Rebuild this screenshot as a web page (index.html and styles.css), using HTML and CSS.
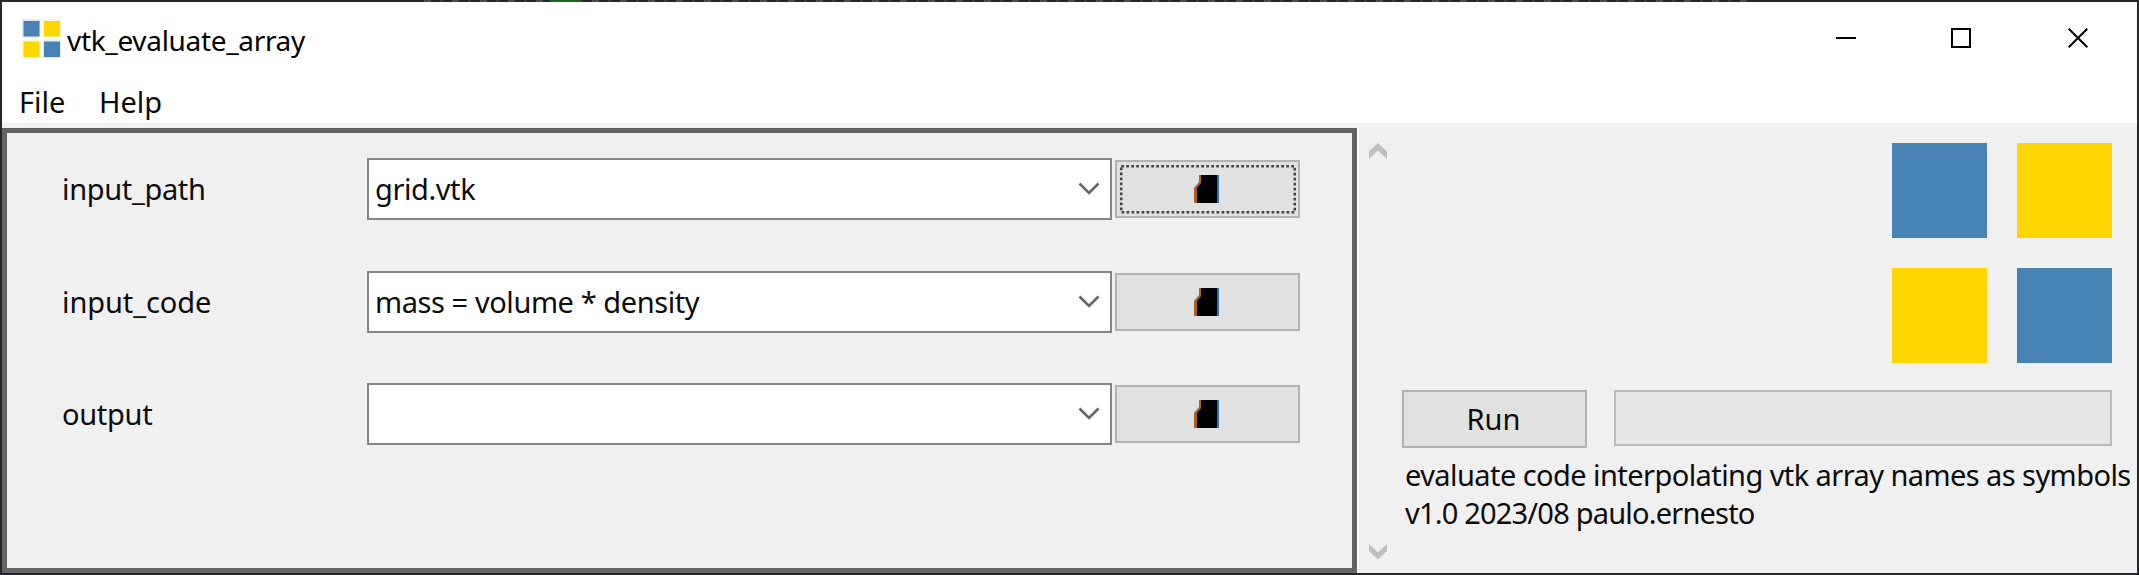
FILE: index.html
```html
<!DOCTYPE html>
<html lang="en">
<head>
<meta charset="utf-8">
<title>vtk_evaluate_array</title>
<link rel="stylesheet" href="styles.css">
</head>
<body>
<div class="window">
  <div class="backdrop"></div>
  <header class="titlebar">
    <svg class="app-icon" viewBox="0 0 40 40"><path class="halo-blue" d="M0 0h18.500v18.500H0zM20.500 20.500H39V39H20.500z"/><path class="halo-gold" d="M20.500 0H39v18.500H20.500zM0 20.500h18.500V39H0z"/><path class="blue" d="M1.500 2h16v15.500h-16zM22 22.500h16V38H22z"/><path class="gold" d="M22 2h16v15.500H22zM1.500 22.500h16V38h-16z"/></svg>
    <h1 class="title">vtk_evaluate_array</h1>
    <div class="controls">
      <svg viewBox="0 0 20 20"><path d="M0 10h20"/></svg>
      <svg viewBox="0 0 20 20"><path d="M1 1h18v18H1z"/></svg>
      <svg viewBox="0 0 20 20"><path d="M.7.7l18.600 18.600M19.300.7L.7 19.300"/></svg>
    </div>
  </header>
  <nav class="menu"><span class="file">File</span><span class="help">Help</span></nav>
  <main class="content">
    <section class="form">
      <div class="row">
        <label class="name path-name">input_path</label>
        <div class="combo"><span class="path-value">grid.vtk</span><svg class="chevron" viewBox="0 0 22 14"><path d="M1.500 1.500L11 11l9.500-9.500"/></svg></div>
        <button class="button browse focused"><svg class="focus" viewBox="0 0 176 49"><rect x="1.250" y="1.250" width="173.500" height="46"/></svg><svg class="glyph" viewBox="0 0 26 28"><path class="fringe-l" d="M5 0h3v10l-5 18H0V13l5-6z"/><path class="fringe-r" d="M22 0h3v28h-3z"/><path d="M7 0h16v28H3V13l4-5z"/></svg></button>
      </div>
      <div class="row">
        <label class="name code-name">input_code</label>
        <div class="combo"><span class="code-value">mass = volume * density</span><svg class="chevron" viewBox="0 0 22 14"><path d="M1.500 1.500L11 11l9.500-9.500"/></svg></div>
        <button class="button browse"><svg class="glyph" viewBox="0 0 26 28"><path class="fringe-l" d="M5 0h3v10l-5 18H0V13l5-6z"/><path class="fringe-r" d="M22 0h3v28h-3z"/><path d="M7 0h16v28H3V13l4-5z"/></svg></button>
      </div>
      <div class="row">
        <label class="name output-name">output</label>
        <div class="combo"><span></span><svg class="chevron" viewBox="0 0 22 14"><path d="M1.500 1.500L11 11l9.500-9.500"/></svg></div>
        <button class="button browse"><svg class="glyph" viewBox="0 0 26 28"><path class="fringe-l" d="M5 0h3v10l-5 18H0V13l5-6z"/><path class="fringe-r" d="M22 0h3v28h-3z"/><path d="M7 0h16v28H3V13l4-5z"/></svg></button>
      </div>
    </section>
    <div class="scrollbar">
      <svg viewBox="0 0 18 16"><path d="M0 8.500L9 0l9 8.500V16L9 7.500 0 16z"/></svg>
      <svg viewBox="0 0 18 16"><path d="M0 0l9 8.500L18 0v7L9 15.500 0 7z"/></svg>
    </div>
    <aside class="side">
      <div class="logo"><i class="sq-blue"></i><i class="sq-gold"></i><i class="sq-gold"></i><i class="sq-blue"></i></div>
      <div class="actions"><button class="button run"><span>Run</span></button><div class="progress"></div></div>
      <p class="about"><span class="about-1">evaluate code interpolating vtk array names as symbols</span><span class="about-2">v1.0 2023/08 paulo.ernesto</span></p>
    </aside>
  </main>
</div>
</body>
</html>
```
FILE: styles.css
```css
* { box-sizing: border-box; }
body {
  margin: 0;
  background: #25252b;
  color: #0c0c0c;
  font-family: "Noto Sans", "Open Sans", sans-serif;
  font-size: 29px;
}
svg { display: block; flex: none; }
span, label, h1 { white-space: nowrap; }
.window {
  width: 2139px;
  height: 575px;
  border: 2px solid #25252b;
  border-top: 0;
  background: #fff;
  display: flex;
  flex-direction: column;
  overflow: hidden;
}
/* Sliver of the editor behind the window */
.backdrop {
  height: 2px;
  flex: none;
  background:
    linear-gradient(#1c6a1c, #1c6a1c) 548px 0 / 30px 2px no-repeat,
    repeating-linear-gradient(90deg, #25252b 0 9px, #4b4c50 9px 16px, #25252b 16px 25px, #3b3c42 25px 28px) 413px 0 / 1338px 2px no-repeat,
    #25252b;
}
.titlebar { height: 76px; display: flex; padding-left: 20px; flex: none; }
.app-icon { width: 40px; height: 40px; margin-top: 17px; }
.halo-blue { fill: #e3ecf4; }
.halo-gold { fill: #fff8d0; }
.blue { fill: #4682b4; }
.gold { fill: #ffd700; }
.title {
  margin: 19px 0 0 5px;
  font-size: 28px;
  line-height: 38px;
  font-weight: 400;
  letter-spacing: -.32px;
  color: #000;
}
.controls { margin: 26px 49px 0 auto; display: flex; }
.controls svg { width: 20px; height: 20px; fill: none; stroke: #000; stroke-width: 2; }
.controls svg + svg { margin-left: 95px; }
.controls svg:last-child { margin-left: 97px; }
.menu { height: 45px; padding: 5px 0 0 17px; display: flex; line-height: 38px; flex: none; }
.file { width: 80px; }
.content { height: 450px; background: #f0f0f0; display: flex; }
.form {
  width: 1355px;
  height: 445px;
  margin-top: 5px;
  border: 5px solid #646464;
  padding: 25px 0 0 55px;
  box-shadow: 2px 0 #fafafa;
  flex: none;
}
.row { height: 62px; margin-bottom: 50.500px; display: flex; align-items: center; }
.name { width: 305px; line-height: 38px; }
.path-name { letter-spacing: -.35px; }
.code-name { letter-spacing: -.1px; }
.output-name { letter-spacing: -.3px; }
.path-value, .code-value { letter-spacing: -.42px; }
.combo {
  width: 745px;
  height: 62px;
  border: 2.500px solid #858585;
  background: #fff;
  display: flex;
  align-items: center;
  justify-content: space-between;
  padding: 0 10px 0 6px;
}
.combo span { line-height: 38px; }
.chevron { width: 22px; height: 14px; fill: none; stroke: #666; stroke-width: 2.600; }
.button {
  width: 185px;
  height: 58px;
  padding: 0;
  border: 2px solid #b2b2b2;
  background: #e1e1e1;
  color: inherit;
  font: inherit;
  display: flex;
  align-items: center;
  justify-content: center;
  position: relative;
}
.browse { margin-left: 3px; padding-right: 2px; }
.focus { position: absolute; left: 3px; top: 3px; width: 176px; height: 49px; }
.focus rect { fill: none; stroke: #444; stroke-width: 2.500; stroke-dasharray: 2.700 2.300; }
.glyph { width: 26px; height: 28px; }
.fringe-l { fill: #a9651c; }
.fringe-r { fill: #1b75bb; }
.scrollbar { width: 18px; margin: 20px 0 13px 12px; display: flex; flex-direction: column; justify-content: space-between; }
.scrollbar svg { width: 18px; height: 16px; fill: #bfbfbf; }
.side { width: 735px; margin-left: 15px; padding-top: 20px; }
.logo { display: grid; grid-template-columns: 95px 95px; grid-auto-rows: 95px; gap: 30px; margin-left: 490px; }
.sq-blue { background: #4682b4; }
.sq-gold { background: #ffd700; }
.actions { display: flex; margin-top: 27px; }
.run span { line-height: 38px; margin-left: -2px; }
.progress { width: 498px; height: 56px; margin-left: 27px; border: 2px solid #bcbcbc; background: #e6e6e6; }
.about { margin: 8px 0 0 3px; line-height: 37.500px; display: flex; flex-direction: column; align-items: flex-start; }
.about-1 { letter-spacing: -.57px; }
.about-2 { letter-spacing: -.8px; }
```
